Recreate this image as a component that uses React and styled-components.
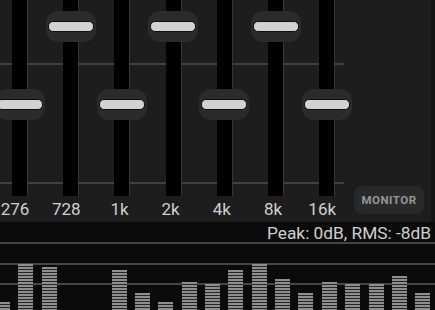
import React from "react";
import styled, { createGlobalStyle } from "styled-components";

// Equalizer bands: knob centre y within the track area
const bands = [
  { label: "276", knob: 104 },
  { label: "728", knob: 26 },
  { label: "1k", knob: 104 },
  { label: "2k", knob: 26 },
  { label: "4k", knob: 104 },
  { label: "8k", knob: 26 },
  { label: "16k", knob: 104 },
];

// Spectrum bar tops (screen y), 0 = not visible
const spectrum = [
  302, 264, 267, 0, 0, 270, 293, 302, 282, 284, 270, 264, 279, 293, 282, 284,
  284, 276, 293,
];

const GlobalStyle = createGlobalStyle`
  html, body {
    margin: 0;
    padding: 0;
    background: #0b0b0b;
  }
`;

const App = () => (
  <>
    <GlobalStyle />
    <Screen>
      <EqPanel>
        <SliderBank>
          {bands.map((band) => (
            <Band key={band.label}>
              <TrackArea>
                <Track />
                <Knob style={{ top: band.knob - 15.5 }}>
                  <Grip />
                </Knob>
              </TrackArea>
              <BandLabel $wide={band.label.length > 2}>{band.label}</BandLabel>
            </Band>
          ))}
        </SliderBank>
        <SidePanel>
          <MonitorButton>MONITOR</MonitorButton>
        </SidePanel>
        <EdgeStrip />
      </EqPanel>
      <Status>Peak: 0dB, RMS: -8dB</Status>
      <Spectrum>
        {spectrum.map((top, i) => (
          <Bar key={i} style={{ height: top ? 320 - top : 0 }} />
        ))}
      </Spectrum>
    </Screen>
  </>
);

export default App;

const Screen = styled.div`
  width: 435px;
  height: 310px;
  overflow: hidden;
  background: #0b0b0b;
  font-family: Roboto, "Liberation Sans", sans-serif;
`;

const EqPanel = styled.div`
  height: 222px;
  display: flex;
  background: #1d1d1d;
`;

const SliderBank = styled.div`
  flex: 0 0 350px;
  min-width: 0;
  margin-left: -6px;
  display: flex;
  background:
    linear-gradient(#414141, #414141) 0 63px / 100% 2px no-repeat,
    linear-gradient(#414141, #414141) 0 182px / 100% 2px no-repeat;
`;

const Band = styled.div`
  flex: 0 0 51.2px;
  display: flex;
  flex-direction: column;
  align-items: center;
`;

const TrackArea = styled.div`
  position: relative;
  width: 100%;
  height: 196px;
  display: flex;
  justify-content: center;
`;

const Track = styled.div`
  width: 15px;
  height: 100%;
  background: #000;
  box-shadow: 1px 0 0 #363636;
`;

const Knob = styled.div`
  position: absolute;
  left: 50%;
  transform: translateX(-50%);
  width: 50px;
  height: 31px;
  border-radius: 12px;
  background: #2b2b2b;
  display: flex;
  align-items: center;
  justify-content: center;
`;

const Grip = styled.div`
  width: 44px;
  height: 9px;
  border-radius: 5px;
  background: #d2d2d2;
  border: 1px solid #0e0e0e;
`;

const BandLabel = styled.div`
  height: 26px;
  line-height: 26px;
  font-size: 17px;
  color: #d0d0d0;
  white-space: nowrap;
  margin-right: ${(p) => (p.$wide ? "9px" : "5px")};
`;

const SidePanel = styled.div`
  flex: 1;
  display: flex;
  align-items: flex-end;
  justify-content: flex-end;
  padding: 0 7px 8px 0;
`;

const MonitorButton = styled.div`
  width: 70px;
  height: 28px;
  border-radius: 8px;
  background: #292929;
  color: #969696;
  font-size: 11.5px;
  font-weight: 700;
  letter-spacing: 0.5px;
  display: flex;
  align-items: center;
  justify-content: center;
`;

const EdgeStrip = styled.div`
  flex: 0 0 4px;
  background: #141414;
`;

const Status = styled.div`
  box-sizing: border-box;
  height: 20px;
  display: flex;
  justify-content: flex-end;
  padding: 3px 4px 0 0;
  font-size: 17.3px;
  line-height: 17px;
  color: #d0d0d0;
  white-space: nowrap;
`;

const Spectrum = styled.div`
  height: 78px;
  margin-left: -5px;
  display: flex;
  align-items: flex-end;
  gap: 8.35px;
  background:
    linear-gradient(#454545, #454545) 0 0 / 100% 2px no-repeat,
    linear-gradient(#454545, #454545) 0 21px / 100% 2px no-repeat,
    linear-gradient(#454545, #454545) 0 41px / 100% 2px no-repeat;
`;

const Bar = styled.div`
  flex: 0 0 15px;
  background: repeating-linear-gradient(
    to bottom,
    #8e8e8e 0 2px,
    #262626 2px 3px
  );
`;
